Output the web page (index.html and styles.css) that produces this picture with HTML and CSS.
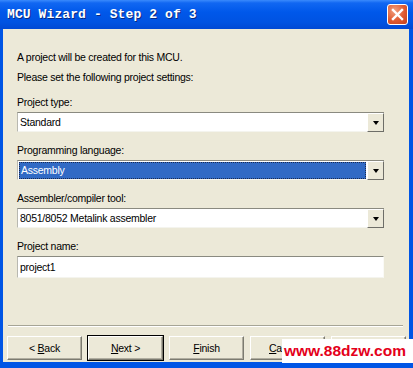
FILE: index.html
```html
<!DOCTYPE html>
<html lang="en">
<head>
  <meta charset="UTF-8" />
  <title>MCU Wizard - Step 2 of 3</title>
  <link rel="stylesheet" href="styles.css">
</head>
<body>
<div class="window">
  <div class="titlebar">
    <span class="title">MCU Wizard - Step 2 of 3</span>
    <span class="close">
      <svg width="13" height="13" viewBox="0 0 13 13"><path d="M2 2 L11 11 M11 2 L2 11" stroke="#fff" stroke-width="2.4" stroke-linecap="square"/></svg>
    </span>
  </div>
  <div class="client">
    <div class="form">
      <p class="intro">A project will be created for this MCU.</p>
      <p class="intro">Please set the following project settings:</p>
      <div class="group first">
        <div class="label">Project type:</div>
        <div class="combo"><span class="value">Standard</span><span class="drop"><i></i></span></div>
      </div>
      <div class="group">
        <div class="label">Programming language:</div>
        <div class="combo focus"><span class="value"><b>Assembly</b></span><span class="drop"><i></i></span></div>
      </div>
      <div class="group">
        <div class="label">Assembler/compiler tool:</div>
        <div class="combo"><span class="value">8051/8052 Metalink assembler</span><span class="drop"><i></i></span></div>
      </div>
      <div class="group">
        <div class="label">Project name:</div>
        <div class="edit">project1</div>
      </div>
    </div>
    <div class="sep"></div>
    <div class="buttons">
      <span class="btn"><span>&lt; <u>B</u>ack</span></span>
      <span class="btn def"><span><u>N</u>ext &gt;</span></span>
      <span class="btn"><span><u>F</u>inish</span></span>
      <span class="btn cancel"><span><u>C</u>a</span></span>
      <span class="btn"></span>
    </div>
  </div>
  <div class="mark">www.88dzw.com</div>
</div>
</body>
</html>
```
FILE: styles.css
```css
*{margin: 0;padding: 0;box-sizing: border-box;}
body{width: 413px;height: 368px;overflow: hidden;font: 10.5px/15px "Liberation Sans", Arial, sans-serif;letter-spacing: -0.25px;color: #000;}
.window{position: relative;width: 413px;height: 368px;display: flex;flex-direction: column;background: #0055e5;padding: 0 4px 6px 3px;}
.titlebar{height: 29px;margin: 0 -4px 0 -3px;padding: 0 5px 0 7px;display: flex;align-items: center;justify-content: space-between;background: linear-gradient(#3a8afc 0, #1167f2 3px, #0058ea 12px, #0053e2 22px, #0049d4 29px);}
.title{font: bold 13px/14px "Liberation Mono", "Courier New", monospace;color: #fff;text-shadow: 1px 1px 0 #0a2a80;letter-spacing: 0.1px;}
.close{width: 21px;height: 21px;display: flex;align-items: center;justify-content: center;border: 1px solid #fff;border-radius: 3px;background: radial-gradient(circle at 35% 30%, #f0a080, #e05a30 55%, #c04020);}
.client{flex: 1;background: #ece9d8;display: flex;flex-direction: column;}
.form{padding: 18px 25px 0 14px;}
.intro{line-height: 20px;}
.group{margin-top: 11px;}
.group.first{margin-top: 8px;}
.label{line-height: 15px;margin-bottom: 2px;}
.combo, .edit{height: 20px;display: flex;background: #fff;border-top: 1px solid #8a8a80;border-left: 1px solid #b8b8b0;border-bottom: 1px solid #f4f4ee;}
.edit{height: 22px;padding: 2px 2px;line-height: 16px;border-right: 1px solid #fafaf6;}
.value{flex: 1;padding: 2px 2px 0 2px;line-height: 15px;white-space: nowrap;}
.focus .value{padding: 1px;}
.focus b{display: block;height: 17px;font-weight: normal;color: #fff;background: #316ac5;outline: 1px dotted #1a2a50;outline-offset: -1px;padding: 1px 2px;line-height: 15px;}
.drop{width: 17px;height: 19px;display: flex;align-items: center;justify-content: center;background: #ece9d8;border: 1px solid;border-color: #fff #6e6e68 #6e6e68 #fff;}
.drop i{width: 0;height: 0;border-left: 3px solid transparent;border-right: 3px solid transparent;border-top: 4px solid #000;}
.sep{margin: auto 6px 0 5px;height: 2px;border-top: 1px solid #a6a596;border-bottom: 1px solid #fff;}
.buttons{display: flex;padding: 9px 0 2px 4px;gap: 6px;}
.btn{width: 75px;height: 24px;display: flex;align-items: center;justify-content: center;border: 1px solid;border-color: #fff #7c7b70 #7c7b70 #fff;box-shadow: inset -1px -1px 0 #b0ada0;}
.btn.def{outline: 1px solid #000;}
.btn.cancel{justify-content: flex-start;padding-left: 18px;}
.mark{position: absolute;left: 282px;top: 339px;width: 131px;height: 24px;background: #fff;color: #e4001a;font: bold 15.5px/24px "Liberation Sans", Arial, sans-serif;letter-spacing: 0;text-align: right;padding-right: 7px;}
```
